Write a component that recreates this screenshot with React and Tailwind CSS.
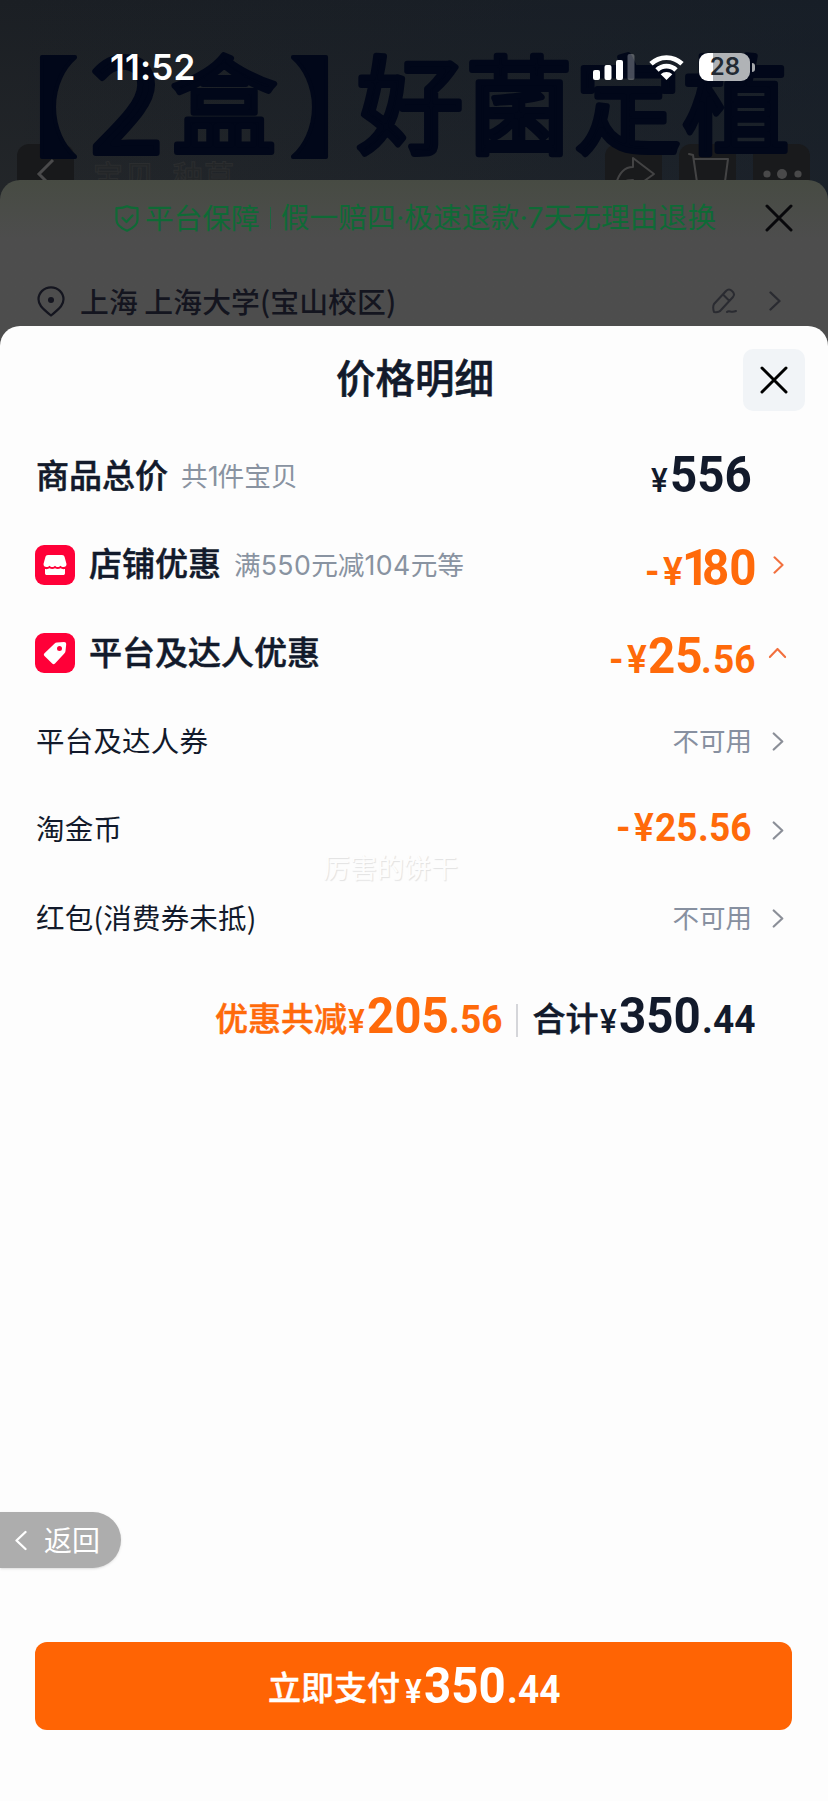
import React from 'react';

const numFont = "font-['Roboto','Noto_Sans_CJK_SC',sans-serif]";

function Chevron({ className }) {
    return (
        <svg className={className} viewBox="0 0 12 20" fill="none" stroke="currentColor" strokeLinecap="round" strokeLinejoin="round">
            <path d="M1.5 1.5 10.5 10 1.5 18.5" strokeWidth="2.3" />
        </svg>
    );
}

function Cross({ className }) {
    return (
        <svg className={className} viewBox="0 0 28 28" fill="none" stroke="currentColor" strokeWidth="3" strokeLinecap="round">
            <path d="M2 2 26 26M26 2 2 26" />
        </svg>
    );
}

function Price({ parts, className = '' }) {
    return (
        <div className={`flex items-baseline whitespace-nowrap font-bold leading-none [-webkit-text-stroke:0px] ${numFont} ${className}`}>
            {parts.map(([text, style], i) => (
                <span key={i} className={`block shrink-0 ${style}`}>
                    <span className="inline-block origin-left scale-x-[0.95]">{text}</span>
                </span>
            ))}
        </div>
    );
}

function Row({ children, label, sub, icon, strong }) {
    return (
        <div className="flex h-[88.5px] items-center">
            {icon}
            <span className={strong ? '-mt-[4px] text-[33px] font-medium [-webkit-text-stroke:0.5px]' : '-mt-[4px] text-[28.5px] font-normal tracking-[0.2px]'}>{label}</span>
            {sub && <span className="ml-[13px] text-[26.7px] font-normal text-[#8993a1]">{sub}</span>}
            <div className="ml-auto flex items-center">{children}</div>
        </div>
    );
}

function StatusBar() {
    return (
        <div className="absolute inset-x-0 top-[50px] flex h-[34px] items-center text-white">
            <span className="ml-[110px] w-[480px] font-['Inter'] text-[35px] font-semibold leading-none tracking-[0.2px]">11:52</span>
            <svg className="ml-[3px] h-[28px] w-[42px]" viewBox="0 0 42 28" fill="currentColor">
                <rect x="0" y="17" width="7" height="10" rx="2" />
                <rect x="11.5" y="12" width="7" height="15" rx="2" />
                <rect x="23" y="7" width="7" height="20" rx="2" />
                <rect x="34.5" y="1" width="7" height="26" rx="2" opacity=".28" />
            </svg>
            <svg className="ml-[14px] h-[27px] w-[35px]" viewBox="0 0 35 27" fill="none" stroke="currentColor" strokeWidth="4.8">
                <path d="M2 9.8a22.3 22.3 0 0 1 31 0" />
                <path d="M8 16a13.6 13.6 0 0 1 19 0" />
                <path d="M11.7 20.3a8.2 8.2 0 0 1 11.6 0L17.5 26z" fill="currentColor" stroke="none" />
            </svg>
            <div className="ml-[15px] flex h-[28px] w-[51px] items-center justify-center rounded-[9px] bg-linear-to-r from-white from-28% to-[#b0b3b6] to-28% pl-px font-['Inter'] text-[24px] font-semibold leading-none text-[#222a33]">28</div>
            <div className="ml-[2px] h-[9px] w-[3px] rounded-r-full bg-[#a5a8ab]" />
        </div>
    );
}

function ShopHeader() {
    return (
        <div className="relative h-[220px] overflow-hidden bg-linear-to-b from-[#1b1f24] to-[#24272a]">
            <div className="absolute inset-0 bg-linear-to-r from-transparent to-[#131d2a]/50" />
            <div className="absolute left-[17px] top-[144px] h-[57px] w-[57px] rounded-[12px] bg-[#18191b]" />
            <div className="absolute left-[605px] top-[144px] flex gap-[17px]">
                <div className="h-[57px] w-[57px] rounded-[12px] bg-[#191a1c]" />
                <div className="h-[57px] w-[57px] rounded-[12px] bg-[#191a1c]" />
                <div className="h-[57px] w-[57px] rounded-[12px] bg-[#191a1c]" />
            </div>
            {/* rounded headline of the product banner */}
            <svg
                className="absolute left-0 top-0 h-[180px] w-[828px] text-[106px] font-normal"
                viewBox="0 0 828 180"
                fill="#010719"
                stroke="#010719"
                strokeWidth="6"
                strokeLinejoin="round"
            >
                <text x="-28" y="147" strokeWidth="4" fontWeight="700">【</text>
                <text x="90" y="153" fontSize="132" fontWeight="400">2</text>
                <text x="171" y="145">盒</text>
                <text x="290" y="147" strokeWidth="4" fontWeight="700">】</text>
                <text x="357" y="145">好</text>
                <text x="466" y="145">菌</text>
                <text x="575" y="145">定</text>
                <text x="683" y="145">植</text>
            </svg>
            <svg className="absolute left-[34px] top-[158px] h-[32px] w-[24px] text-[#4a4a4b]" viewBox="0 0 24 32" fill="none" stroke="currentColor" strokeWidth="3">
                <path d="M19 2 5 16 19 30" />
            </svg>
            <span className="absolute left-[93px] top-[159px] whitespace-pre text-[30px] font-medium leading-none tracking-[1.5px] text-[#232628] [-webkit-text-stroke:1px_#2b2d2f]">宝贝  种草</span>
            <svg className="absolute left-[605px] top-[144px] h-[57px] w-[205px]" viewBox="0 0 205 57" fill="none" stroke="#434344" strokeWidth="2" strokeLinejoin="round" strokeLinecap="round">
                <path d="M11 40c3-11 9-17 17-17v-9l21 16-21 15v-9c-7 0-13 2-17 8" />
                <path d="M84 10l4 1 5 34h26l4-30H89" />
                <g fill="#49494a" stroke="none">
                    <circle cx="162" cy="30" r="3.6" />
                    <circle cx="177" cy="30" r="5" />
                    <circle cx="193" cy="30" r="3.6" />
                </g>
            </svg>
            <StatusBar />
        </div>
    );
}

function OrderPanel() {
    return (
        <div className="relative -mt-[40px] h-[170px] rounded-t-[20px] bg-linear-to-b from-[#474b43] to-[#4d4d4d] to-35%">
            <div className="flex h-[76px] items-center pl-[115px] text-[28.7px] font-normal text-[#0f6a36]">
                <svg className="h-[27px] w-[24px]" viewBox="0 0 24 27" fill="none" stroke="currentColor" strokeWidth="2.2" strokeLinejoin="round" strokeLinecap="round">
                    <path d="M12 1.3c3 1.6 6.5 2 10.5 1.9V15c0 5-4 8-10.5 10.7C5.5 23 1.5 20 1.5 15V3.2C5.5 3.300 9 2.900 12 1.300z" />
                    <path d="M7.5 13l4 4 6-6.5" />
                </svg>
                <span className="-mt-[2px] ml-[6px] shrink-0">平台保障</span>
                <span className="mx-[10px] h-[22px] w-[1px] shrink-0 bg-[#1d6540]" />
                <span className="whitespace-nowrap font-['Inter','Noto_Sans_CJK_SC',sans-serif] tracking-[0.1px]">假一赔四·极速退款·7天无理由退换</span>
                <Cross className="ml-auto mr-[35px] h-[28px] w-[28px] text-[#08080b]" />
            </div>
            <div className="mt-[7px] flex h-[76px] items-center pl-[37px] pr-[47px] text-[#14151f]">
                <svg className="h-[31px] w-[28px]" viewBox="0 0 28 31" fill="none" stroke="currentColor" strokeWidth="2.2">
                    <path d="M14 1.3c7 0 12.5 5.5 12.5 12 0 5-2.5 8-12.5 16.2C4 21.3 1.5 18.3 1.5 13.3 1.5 6.8 7 1.3 14 1.3z" strokeLinejoin="round" />
                    <circle cx="14" cy="14" r="3" fill="currentColor" stroke="none" />
                </svg>
                <span className="ml-[15px] text-[28.8px] font-medium tracking-[0.1px]">上海 上海大学(宝山校区)</span>
                <svg className="ml-auto h-[26px] w-[25px] text-[#2a2b31]" viewBox="0 0 25 26" fill="none" stroke="currentColor" strokeWidth="2" strokeLinejoin="round" strokeLinecap="round">
                    <path d="M2 16 14 3c2-2 4-2 6 0 2.5 2 2.5 4 1 6L9 22c-1 1.5-3 2.5-7 2-1-3-1-6 0-8zM11 6.5 17.5 13M15 24c2-2 4 1 9-1" />
                </svg>
                <Chevron className="ml-[32px] h-[20px] w-[12px] text-[#2a2b31]" />
            </div>
        </div>
    );
}

function App() {
    return (
        <div className="relative h-[1801px] w-[828px] overflow-hidden bg-[#4d4d4d] font-['Noto_Sans_CJK_SC',sans-serif] leading-none text-[#121a2b]">
            <ShopHeader />
            <OrderPanel />

            <div className="relative -mt-[24px] h-[1475px] rounded-t-[20px] bg-[#fdfdfd] px-[36px]">
                <div className="flex h-[106px] items-center justify-center">
                    <h2 className="-mt-[6px] ml-[2px] text-[39.5px] font-medium [-webkit-text-stroke:0.6px]">价格明细</h2>
                    <button className="absolute right-[23px] top-[23px] flex h-[62px] w-[62px] items-center justify-center rounded-[10px] bg-[#f1f4f7] text-black">
                        <Cross className="mb-px h-[28px] w-[28px]" />
                    </button>
                </div>

                <Row
                    strong
                    label="商品总价"
                    sub={<>共<span className="font-['Inter'] tracking-[-1px]">1</span>件宝贝</>}
                >
                    <Price className="-mt-[2px] mr-[41px]" parts={[
                        ['¥', 'w-[19px] text-[33px] font-medium'],
                        ['556', 'w-[81px] text-[50px]'],
                    ]} />
                </Row>
                <Row
                    strong
                    label="店铺优惠"
                    sub={<>满<span className="font-['Inter'] tracking-[0.4px]">550</span>元减<span className="font-['Inter'] tracking-[0.4px]">104</span>元等</>}
                    icon={
                        <div className="-ml-px mr-[14px] flex h-[40px] w-[40px] items-center justify-center rounded-[9px] bg-[#ff0038]">
                            <svg className="h-[22px] w-[24px]" viewBox="0 0 24 22" fill="white">
                                <path d="M5 1h14c1.5 0 2.3.7 2.6 2L23.5 10c0 2-1 3-3 3-1.5 0-2.3-.4-3-1.3-.8.9-1.6 1.3-2.8 1.3-1.1 0-2-.4-2.7-1.3-.7.9-1.6 1.3-2.7 1.3-1.2 0-2-.4-2.8-1.3-.7.9-1.5 1.3-3 1.3-2 0-3-1-3-3L2.4 3C2.7 1.7 3.5 1 5 1z" />
                                <path d="M2 15c2 .4 3.5 0 4.5-.7 1.5 1 4 1 5.5 0 1.5 1 4 1 5.5 0 1 .7 2.5 1.1 4.5.7v4c0 1.4-.6 2-2 2H4c-1.4 0-2-.6-2-2z" />
                            </svg>
                        </div>
                    }
                >
                    <Price className="mt-[6px] text-[#ff6a0a]" parts={[
                        ['-', 'w-[18px] text-[39px]'],
                        ['¥', 'w-[19px] text-[39px] font-semibold'],
                        ['1', 'w-[20px] text-[50px]'],
                        ['80', 'w-[54px] text-[50px]'],
                    ]} />
                    <Chevron className="ml-[17px] mr-[8px] h-[18px] w-[11px] text-[#f2703e]" />
                </Row>
                <Row
                    strong
                    label="平台及达人优惠"
                    icon={
                        <div className="-ml-px mr-[14px] flex h-[40px] w-[40px] items-center justify-center rounded-[9px] bg-[#ff0038]">
                            <svg className="h-[24px] w-[24px]" viewBox="0 0 24 24" fill="white">
                                <path fillRule="evenodd" d="M14 1.5 21 1c1.5 0 2.2.7 2.2 2.2L22.5 10c0 1-.4 1.8-1.2 2.6L12 22.5c-1 .9-1.8.9-2.8 0L1.5 15c-.9-1-.9-1.8 0-2.8L11.4 2.7c.8-.8 1.6-1.1 2.6-1.2zM16.5 5a2.5 2.5 0 1 0 0 5 2.5 2.5 0 0 0 0-5z" />
                            </svg>
                        </div>
                    }
                >
                    <Price className="mt-[5px] text-[#ff6a0a]" parts={[
                        ['-', 'w-[18px] text-[39px]'],
                        ['¥', 'w-[21px] text-[39px] font-semibold'],
                        ['25', 'w-[53px] text-[50px]'],
                        ['.', 'w-[12px] text-[39px]'],
                        ['56', 'w-[43px] text-[39px]'],
                    ]} />
                    <Chevron className="ml-[16px] mr-[9px] h-[18px] w-[11px] -rotate-90 text-[#f2703e]" />
                </Row>
                <Row label="平台及达人券">
                    <span className="-mt-[3px] text-[26.5px] font-normal text-[#8790a0]">不可用</span>
                    <Chevron className="ml-[20px] mr-[8px] h-[19px] w-[12px] text-[#8b8f98]" />
                </Row>
                <Row label="淘金币">
                    <Price className="-mt-[4px] text-[#ff6a0a]" parts={[
                        ['-', 'w-[18px] text-[39px]'],
                        ['¥', 'w-[21px] text-[39px] font-semibold'],
                        ['25', 'w-[43px] text-[39px]'],
                        ['.', 'w-[11px] text-[39px]'],
                        ['56', 'w-[43px] text-[39px]'],
                    ]} />
                    <Chevron className="ml-[20px] mr-[8px] h-[19px] w-[12px] text-[#8b8f98]" />
                </Row>
                <Row label="红包(消费券未抵)">
                    <span className="-mt-[3px] text-[26.5px] font-normal text-[#8790a0]">不可用</span>
                    <Chevron className="ml-[20px] mr-[8px] h-[19px] w-[12px] text-[#8b8f98]" />
                </Row>

                <div className="mt-[5px] flex h-[96px] items-center pl-[179px]">
                    <div className="flex items-baseline text-[#ff6a0a]">
                        <span className="relative -top-[2px] w-[133px] text-[33px] font-medium [-webkit-text-stroke:0.5px]">优惠共减</span>
                        <Price parts={[
                            ['¥', 'w-[19px] text-[33px] font-semibold'],
                            ['205', 'w-[82px] text-[50px]'],
                            ['.', 'w-[11px] text-[39px]'],
                            ['56', 'w-[56px] text-[39px]'],
                        ]} />
                    </div>
                    <span className="mt-[8px] h-[33px] w-[1.5px] bg-[#d5d6da]" />
                    <div className="ml-[15px] flex items-baseline">
                        <span className="relative -top-[2px] w-[67px] text-[33px] font-medium [-webkit-text-stroke:0.5px]">合计</span>
                        <Price parts={[
                            ['¥', 'w-[19px] text-[33px] font-medium'],
                            ['350', 'w-[83px] text-[50px]'],
                            ['.', 'w-[11px] text-[39px]'],
                            ['44', 'w-[42px] text-[39px]'],
                        ]} />
                    </div>
                </div>

                <span className="absolute left-[323px] top-[527px] text-[27px] font-normal text-[#fdfdfd] [text-shadow:1px_1px_1px_#e2e2e2]">厉害的饼干</span>

                <button className="absolute left-0 top-[1186px] flex h-[56px] w-[121px] items-center rounded-r-full bg-[#adadad] text-white shadow-sm">
                    <Chevron className="ml-[15px] h-[21px] w-[12px] rotate-180" />
                    <span className="-mt-[3px] ml-[17px] text-[28px] font-normal">返回</span>
                </button>

                <button className="absolute left-[35px] top-[1316px] flex h-[88px] w-[757px] items-center rounded-[12px] bg-[#ff6404] pl-[231px] text-white">
                    <div className="-ml-[2px] -mt-[3px] flex items-baseline">
                        <span className="relative -top-[2px] w-[140px] text-[33px] font-medium [-webkit-text-stroke:0.5px]">立即支付</span>
                        <Price className="relative top-px" parts={[
                            ['¥', 'w-[20px] text-[33px] font-semibold'],
                            ['350', 'w-[83px] text-[50px]'],
                            ['.', 'w-[11px] text-[39px]'],
                            ['44', 'w-[42px] text-[39px]'],
                        ]} />
                    </div>
                </button>
            </div>
        </div>
    );
}

export default App;
